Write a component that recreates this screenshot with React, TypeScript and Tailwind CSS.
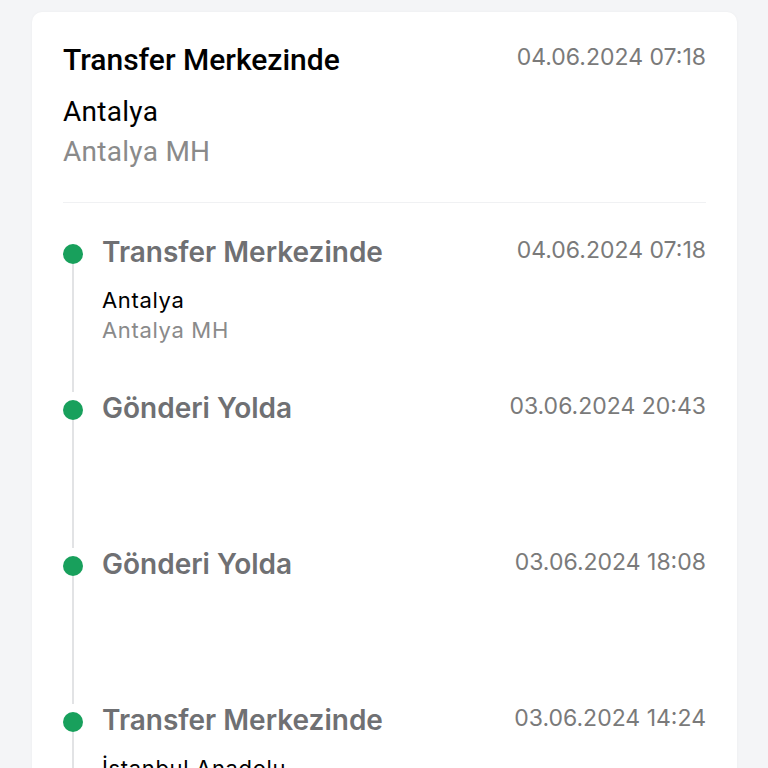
const events = [
  { title: "Transfer Merkezinde", date: "04.06.2024 07:18", city: "Antalya", place: "Antalya MH" },
  { title: "Gönderi Yolda", date: "03.06.2024 20:43" },
  { title: "Gönderi Yolda", date: "03.06.2024 18:08" },
  { title: "Transfer Merkezinde", date: "03.06.2024 14:24", city: "İstanbul Anadolu", place: "İstanbul Anadolu TM" },
  { title: "Gönderi Kabul Edildi", date: "03.06.2024 11:02", city: "İstanbul", place: "Kadıköy Şube" },
];

export default function App() {
  return (
    <div className="min-h-screen bg-[#f4f5f7] pl-8 pr-[31px] pt-3 pb-8">
      <div className="bg-white rounded-[10px] shadow-[0_0_3px_rgba(0,0,0,0.04)] px-[31px]">
        <div className="pt-[31px] pb-[30px] border-b border-[#f0f1f3] font-['Roboto',sans-serif]">
          <div className="flex items-start justify-between">
            <h1 className="text-[30px] leading-[34px] font-medium text-black">Transfer Merkezinde</h1>
            <span className="text-[23px] leading-[28px] text-[#7a7a7a] font-['Inter',sans-serif]">04.06.2024 07:18</span>
          </div>
          <p className="mt-[15px] text-[28px] leading-[40px] tracking-[0.01em] text-black">Antalya</p>
          <p className="text-[28px] leading-[40px] tracking-[0.01em] text-[#8a8a8a]">Antalya MH</p>
        </div>

        <div className="pt-[33px] font-['Inter',sans-serif]">
          {events.map((e, i) => (
            <div key={i} className="flex min-h-[156px]">
              <div className="flex flex-col items-center w-5 shrink-0">
                <div className="mt-[8px] h-5 w-5 rounded-full bg-[#18a05c]" />
                <div className="flex-1 w-[2px] bg-[#e2e3e5]" />
              </div>
              <div className="flex-1 pl-[19px]">
                <div className="flex items-start justify-between">
                  <h2 className="text-[28px] leading-[32px] font-semibold text-[#6f7073]">{e.title}</h2>
                  <span className="text-[23px] leading-[28px] text-[#7a7a7a]">{e.date}</span>
                </div>
                {e.city && (
                  <div className="mt-[17px] text-[22px] leading-[30px] tracking-[0.03em]">
                    <p className="text-black">{e.city}</p>
                    <p className="text-[#8a8a8a]">{e.place}</p>
                  </div>
                )}
              </div>
            </div>
          ))}
        </div>
      </div>
    </div>
  );
}
